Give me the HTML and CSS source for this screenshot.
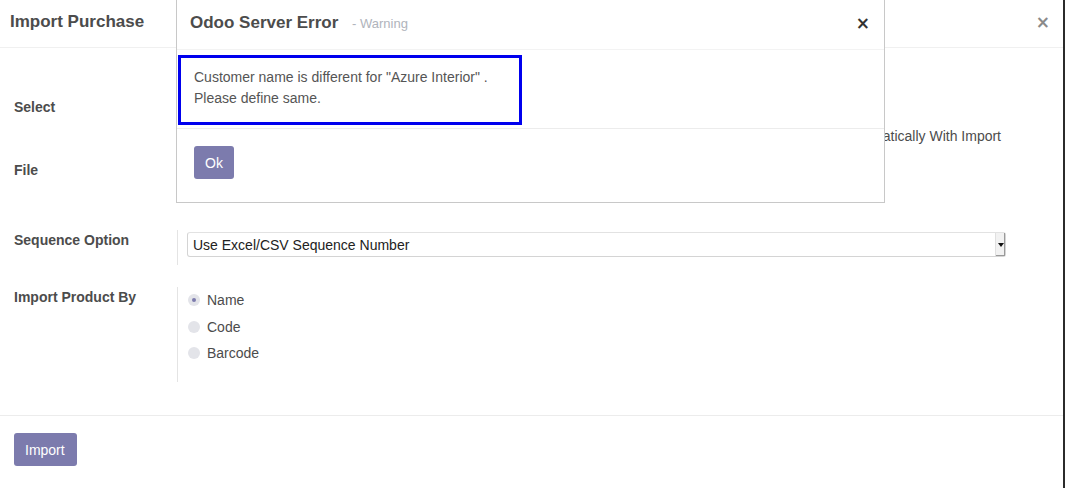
FILE: index.html
```html
<!DOCTYPE html>
<html>
<head>
<meta charset="utf-8">
<title>Import Purchase</title>
<link rel="stylesheet" href="styles.css">
</head>
<body>
<div class="page">
  <div class="modal">
    <div class="modal-header">
      <h4 class="modal-title">Import Purchase</h4>
      <span class="close close-light">&times;</span>
    </div>
    <div class="modal-body">
      <div class="top-groups">
        <div class="group-left">
          <div class="lbl lbl-select">Select</div>
          <div class="lbl lbl-file">File</div>
        </div>
        <div class="group-right">
          <span class="check-text">Create Vendor Automatically With Import</span>
        </div>
      </div>
      <div class="row row-seq">
        <div class="lbl">Sequence Option</div>
        <div class="field">
          <div class="select">
            <span class="select-text">Use Excel/CSV Sequence Number</span>
            <span class="select-btn"><span class="caret"></span></span>
          </div>
        </div>
      </div>
      <div class="row row-prod">
        <div class="lbl">Import Product By</div>
        <div class="field radios">
          <div class="radio"><span class="dot checked"></span>Name</div>
          <div class="radio"><span class="dot"></span>Code</div>
          <div class="radio"><span class="dot"></span>Barcode</div>
        </div>
      </div>
    </div>
    <div class="modal-footer">
      <button class="btn">Import</button>
    </div>
  </div>

  <div class="dialog">
    <div class="dialog-header">
      <h4 class="dialog-title">Odoo Server Error <small class="sub">- Warning</small></h4>
      <span class="close close-dark">&times;</span>
    </div>
    <div class="dialog-body">
      <div class="msg">Customer name is different for "Azure Interior" .<br>Please define same.</div>
    </div>
    <div class="dialog-footer">
      <button class="btn btn-ok">Ok</button>
    </div>
  </div>
</div>
</body>
</html>
```

FILE: styles.css
```css
html, body {
  margin: 0;
  padding: 0;
  background: #fff;
}
body {
  font-family: "Liberation Sans", Arial, sans-serif;
  font-size: 14px;
  color: #4c4c4c;
}
.page {
  position: relative;
  width: 1065px;
  height: 488px;
  overflow: hidden;
  box-sizing: border-box;
  border-right: 2px solid #2b2b2b;
}
.modal {
  display: flex;
  flex-direction: column;
  height: 100%;
}
.modal-header {
  height: 48px;
  box-sizing: border-box;
  border-bottom: 1px solid #f0f0f0;
  display: flex;
  align-items: flex-start;
  justify-content: space-between;
  padding: 11px 13px 0 10px;
}
.modal-title, .dialog-title {
  margin: 0;
  font-size: 17px;
  line-height: 22px;
  font-weight: bold;
  color: #4c4c4c;
}
.close {
  font-size: 17px;
  line-height: 22px;
  font-weight: bold;
  font-family: "DejaVu Sans", sans-serif;
}
.close-light { color: #8a8a8a; }
.close-dark { color: #333; }

.modal-body {
  flex: 1;
  padding: 0 14px;
}
.top-groups {
  display: flex;
  height: 170px;
}
.group-left {
  width: 163px;
}
.lbl {
  font-weight: bold;
  color: #4c4c4c;
  line-height: 20px;
}
.lbl-select { margin-top: 49px; }
.lbl-file { margin-top: 43px; }
.group-right {
  flex: 1;
  display: flex;
  justify-content: flex-end;
  padding-right: 48px;
  padding-top: 78px;
}
.check-text {
  color: #4c4c4c;
  line-height: 20px;
}

.row {
  display: grid;
  grid-template-columns: 163px 1fr;
}
.row .field {
  border-left: 1px solid #e4e4e4;
  padding-left: 9px;
}
.row-seq {
  margin-top: 12px;
}
.row-seq .field {
  padding-top: 2px;
  padding-bottom: 8px;
  padding-right: 43px;
}
.select {
  height: 25px;
  box-sizing: border-box;
  border: 1px solid #d4d4d4;
  border-top-color: #e2e2e2;
  border-radius: 3px;
  display: flex;
  align-items: center;
  justify-content: space-between;
  padding-left: 5px;
  background: #fff;
}
.select-text {
  color: #222;
  font-size: 14px;
}
.select-btn {
  width: 9px;
  height: 23px;
  background: #f2f2f2;
  border-left: 1px solid #e0e0e0;
  box-shadow: inset -1px -1px 0 #9a9a9a;
  display: flex;
  align-items: center;
  justify-content: center;
}
.caret {
  width: 0;
  height: 0;
  border-left: 3px solid transparent;
  border-right: 3px solid transparent;
  border-top: 4px solid #111;
}
.row-prod {
  margin-top: 22px;
}
.radios {
  padding-top: 0;
  padding-bottom: 15px;
}
.radio {
  display: flex;
  align-items: center;
  height: 26.5px;
  color: #4c4c4c;
}
.dot {
  width: 12px;
  height: 12px;
  border-radius: 50%;
  background: #e3e4e9;
  margin-right: 7px;
  margin-left: 1px;
  position: relative;
}
.dot.checked::after {
  content: "";
  position: absolute;
  left: 4px;
  top: 4px;
  width: 4px;
  height: 4px;
  border-radius: 50%;
  background: #7c7bad;
}

.modal-footer {
  border-top: 1px solid #ececec;
  height: 73px;
  box-sizing: border-box;
  padding: 17px 14px 0;
}
.btn {
  background: #7c7bad;
  color: #fff;
  border: none;
  border-radius: 3px;
  font-family: "Liberation Sans", Arial, sans-serif;
  font-size: 14px;
  height: 33px;
  padding: 0 12px 0 11px;
  cursor: pointer;
}

.dialog {
  position: absolute;
  left: 176px;
  top: -1px;
  width: 709px;
  height: 204px;
  box-sizing: border-box;
  background: #fff;
  border: 1px solid #c8c8c8;
  display: flex;
  flex-direction: column;
}
.dialog-header {
  height: 50px;
  box-sizing: border-box;
  border-bottom: 1px solid #f3f3f3;
  display: flex;
  justify-content: space-between;
  align-items: flex-start;
  padding: 12px 14px 0 13px;
}
.sub {
  font-size: 13px;
  font-weight: normal;
  color: #b0b4bc;
  margin-left: 9px;
}
.dialog-body {
  padding: 5px 0 3px 1px;
  border-bottom: 1px solid #ececec;
}
.msg {
  width: 344px;
  height: 70px;
  box-sizing: border-box;
  border: 3px solid #0000ee;
  padding: 9px 13px;
  line-height: 21px;
  color: #555;
  font-size: 14px;
}
.dialog-footer {
  padding: 17px 17px 0;
}
.btn-ok {
  padding: 0 11px;
}
```
